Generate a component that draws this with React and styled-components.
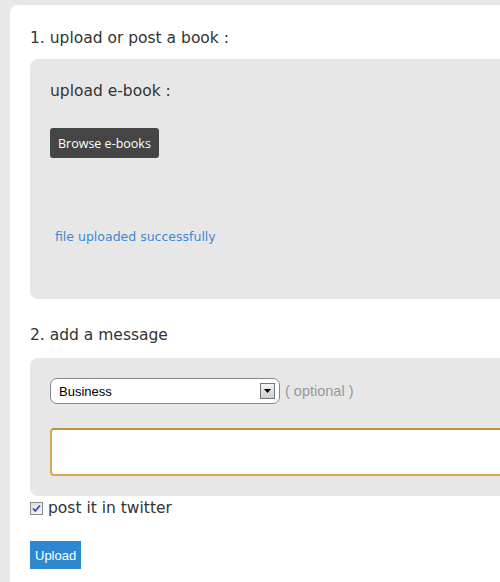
import styled, { createGlobalStyle } from "styled-components";

const GlobalStyle = createGlobalStyle`
  html, body {
    margin: 0;
    padding: 0;
    background: #e8e8e8;
    overflow: hidden;
  }
  body {
    font-family: "DejaVu Sans", Verdana, sans-serif;
    color: #333;
  }
`;

const Page = styled.div`
  padding: 5px 0 0 10px;
  height: 577px;
`;

const Card = styled.div`
  background: #fff;
  border-radius: 8px 0 0 0;
  padding: 24px 0 14px 20px;
  height: 100%;
  box-sizing: border-box;
`;

const Heading = styled.h2`
  margin: 0 0 ${(p) => p.$gap}px 0;
  font-size: 15.5px;
  font-weight: normal;
  color: #333;
`;

const Panel = styled.div`
  background: #e7e7e7;
  border-radius: 8px 0 0 8px;
  padding: 20px 0 0 20px;
  height: ${(p) => p.$height}px;
  box-sizing: border-box;
  margin-bottom: ${(p) => p.$gap}px;
`;

const SubHeading = styled.div`
  font-size: 15.5px;
  padding-top: 3px;
  margin-bottom: 28px;
`;

const BrowseButton = styled.button`
  background: #454545;
  color: #fff;
  border: none;
  border-radius: 3px;
  font-family: "Open Sans", sans-serif;
  font-size: 12.5px;
  height: 30px;
  padding: 0 8px;
  cursor: pointer;
`;

const Success = styled.div`
  margin: 71px 0 0 5px;
  font-size: 12.5px;
  color: #3a8bd6;
`;

const SelectRow = styled.div`
  display: flex;
  align-items: center;
  gap: 5px;
`;

const SelectBox = styled.div`
  width: 230px;
  height: 26px;
  box-sizing: border-box;
  border: 1px solid #888;
  border-radius: 7px;
  background: #fff;
  display: flex;
  align-items: center;
  justify-content: space-between;
  padding: 0 4px 0 8px;
  font-family: "Liberation Sans", Arial, sans-serif;
  font-size: 13px;
  color: #000;
`;

const Arrow = styled.span`
  width: 15px;
  height: 16px;
  box-sizing: border-box;
  border: 1px solid #777;
  background: linear-gradient(#f4f4f4, #cfcfcf);
  display: flex;
  align-items: center;
  justify-content: center;
`;

const Optional = styled.span`
  font-family: "Liberation Sans", Arial, sans-serif;
  font-size: 14.5px;
  color: #999;
`;

const MessageBox = styled.textarea`
  display: block;
  margin-top: 24px;
  width: calc(100% + 10px);
  height: 48px;
  box-sizing: border-box;
  border: 2px solid #d8a850;
  border-top-color: #c49040;
  border-right: none;
  border-radius: 4px 0 0 4px;
  resize: none;
  background: #fff;
  outline: none;
`;

const CheckRow = styled.label`
  display: flex;
  align-items: center;
  gap: 5px;
  font-size: 15.5px;
  height: 24px;
`;

const CheckBox = styled.span`
  width: 13px;
  height: 13px;
  box-sizing: border-box;
  border: 1px solid #8a8a8a;
  background: linear-gradient(135deg, #dcdcdc, #fafafa);
  display: flex;
  align-items: center;
  justify-content: center;
`;

const UploadButton = styled.button`
  margin-top: 21px;
  background: #2e88d0;
  color: #fff;
  border: none;
  font-family: "Liberation Sans", Arial, sans-serif;
  font-size: 13px;
  height: 28px;
  padding: 0 5px;
  cursor: pointer;
`;

export default function App() {
  return (
    <>
      <GlobalStyle />
      <Page>
        <Card>
          <Heading $gap={12}>1. upload or post a book :</Heading>
          <Panel $height={240} $gap={27}>
            <SubHeading>upload e-book :</SubHeading>
            <BrowseButton>Browse e-books</BrowseButton>
            <Success>file uploaded successfully</Success>
          </Panel>
          <Heading $gap={14}>2. add a message</Heading>
          <Panel $height={138} $gap={0}>
            <SelectRow>
              <SelectBox>
                Business
                <Arrow>
                  <svg width="7" height="4" viewBox="0 0 7 4">
                    <path d="M0 0h7L3.5 4z" fill="#000" />
                  </svg>
                </Arrow>
              </SelectBox>
              <Optional>( optional )</Optional>
            </SelectRow>
            <MessageBox />
          </Panel>
          <CheckRow>
            <CheckBox>
              <svg width="9" height="9" viewBox="0 0 9 9">
                <path d="M1 4.5l2.3 2.5L8 1.5" fill="none" stroke="#3b4fa8" strokeWidth="1.8" />
              </svg>
            </CheckBox>
            post it in twitter
          </CheckRow>
          <UploadButton>Upload</UploadButton>
        </Card>
      </Page>
    </>
  );
}
